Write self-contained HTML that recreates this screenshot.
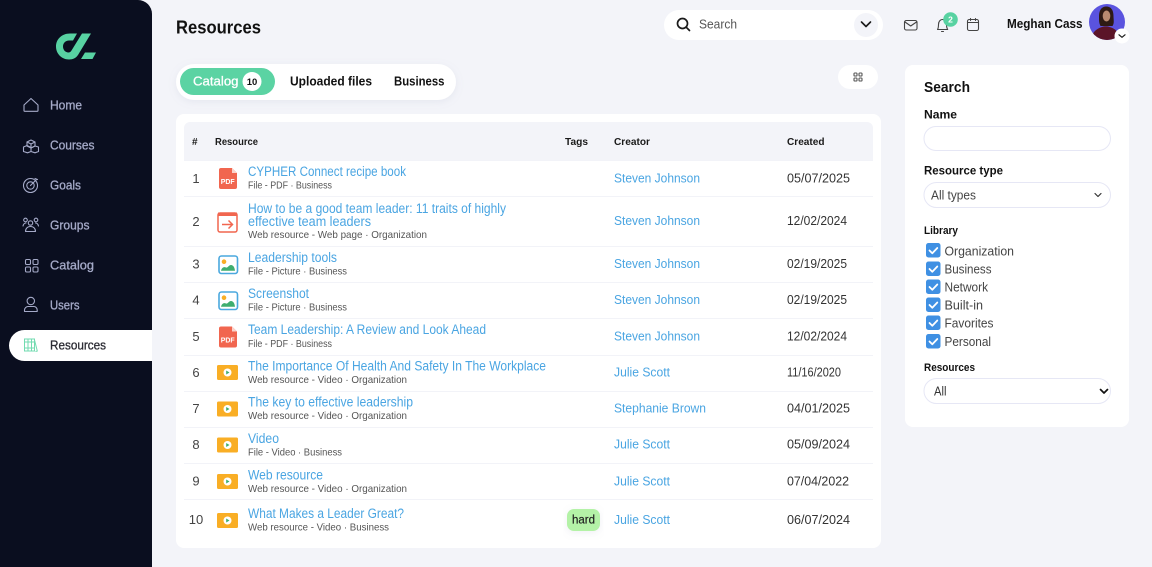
<!DOCTYPE html>
<html><head><meta charset="utf-8"><title>Resources</title>
<style>
html,body{margin:0;padding:0;background:#f3f4f9;width:1152px;height:567px;overflow:hidden}
svg{display:block}
text{font-family:"Liberation Sans",sans-serif}
.nav{font-size:13px;fill:#a5aac8;stroke:#a5aac8;stroke-width:.3}
.ttl{font-size:13.5px;fill:#4aa5e2}
.sub{font-size:10.5px;fill:#555}
.cr{font-size:13px;fill:#4aa5e2}
.dt{font-size:13px;fill:#333}
.n{font-size:13px;fill:#444;text-anchor:middle}
.th{font-size:10px;font-weight:bold;fill:#1a1a1a}
.b{font-weight:bold;fill:#111}
.lb{font-size:12.5px;fill:#444}
.ic{fill:none;stroke:#a5aac8;stroke-width:1.1;stroke-linejoin:round;stroke-linecap:round}
.dk{fill:none;stroke:#444;stroke-width:1.1;stroke-linejoin:round;stroke-linecap:round}
</style></head><body>
<svg width="1152" height="567" viewBox="0 0 1152 567" xmlns="http://www.w3.org/2000/svg">
<defs>
<g id="pdf"><path d="M0 2a2 2 0 0 1 2-2h11l5 5v14a2 2 0 0 1-2 2H2a2 2 0 0 1-2-2z" fill="#f1664f"/><path d="M13 0l5 5h-5z" fill="#fbd3cb"/><text x="8.700" y="16" text-anchor="middle" style="font-size:7px;font-weight:bold;fill:#fff">PDF</text></g>
<g id="pic"><rect x="1" y="1" width="18.500" height="17.500" rx="2.500" fill="#fff" stroke="#4aa8de" stroke-width="1.600"/><circle cx="6" cy="6.700" r="2.300" fill="#f9ae25"/><path d="M3 15.800c.8-3.300 3-4.300 5-3.300 2 .6 2.600-2.500 5-2.500 2.300 0 3.700 2.500 4 5.800z" fill="#3fae6f"/></g>
<g id="vid"><rect width="21" height="15" rx="1.500" fill="#f9ae25"/><circle cx="10.500" cy="7.500" r="4" fill="#fff"/><path d="M9.200 5.500l3.300 2-3.300 2z" fill="#3fae6f"/></g>
<g id="chk"><rect width="14.500" height="14.500" rx="2.500" fill="#3f90e3"/><path d="M3.500 7.500l2.800 2.800 5-5.300" fill="none" stroke="#fff" stroke-width="1.800" stroke-linecap="round" stroke-linejoin="round"/></g>
<filter id="sh" x="-10%" y="-30%" width="120%" height="170%"><feDropShadow dx="0" dy="2" stdDeviation="4" flood-color="#8a8fb0" flood-opacity=".13"/></filter>
<clipPath id="av"><circle cx="1107" cy="22" r="18"/></clipPath>
</defs>

<!-- sidebar -->
<path d="M0 0H138a14 14 0 0 1 14 14V567H0z" fill="#0a0e1f"/>
<path d="M77 33.500H70C62 33.500 56 39 56 46.500C56 54 62 59.500 69 59.500C73 59.500 76 58 78 55L91 33.500H82L71.500 50.500C70.500 52 69.500 52.500 68.500 52.500C65.500 52.500 63 50 63 46.500C63 43 65.500 40.500 69 40.500H73Z" fill="#58d2a2"/>
<path d="M85 52.500h11l-3.500 6.500H81z" fill="#58d2a2"/>

<path class="ic" d="M24 105l7-6.500 7 6.500v5.500a.8.8 0 0 1-.8.800H24.800a.8.8 0 0 1-.8-.800z"/>
<g class="ic"><path d="M27 142l4-2 4 2v4l-4 2-4-2z"/><path d="M23.500 147l3.500-1.500 4 2v4l-3.500 1.300-4-1.300z"/><path d="M31 148l4-2 3.500 1v4.500l-3.500 1.300-4-1.300"/><path d="M27 142l4 2 4-2M31 144v3"/></g>
<g class="ic"><circle cx="30.500" cy="185.500" r="7"/><circle cx="30.500" cy="185.500" r="3.700"/><path d="M30.500 185.500l6-6M35 178.500l2.500 1"/></g>
<g class="ic"><circle cx="25.500" cy="220" r="1.800"/><circle cx="30.500" cy="223" r="2.200"/><circle cx="36" cy="220" r="1.800"/><path d="M23 226c.5-2 1.500-3 3-3M38.500 226c-.5-2-1.500-3-3-3M25.500 231.500c0-3 2-5 5-5s5 2 5 5z"/></g>
<g class="ic"><rect x="25.500" y="259.500" width="5" height="5" rx="1.200"/><rect x="33" y="259.500" width="5" height="5" rx="1.200"/><rect x="25.500" y="267" width="5" height="5" rx="1.200"/><rect x="33" y="267" width="5" height="5" rx="1.200"/></g>
<g class="ic"><circle cx="30.800" cy="301" r="3.700"/><path d="M24.500 311.500v-1.500c0-2 2-3.500 3.500-3.500h6c1.500 0 3.200 1.500 3.200 3.500v1.500z"/></g>

<path d="M152 330H24.500a15.500 15.500 0 0 0 0 31H152z" fill="#fff"/>
<g fill="none" stroke="#72dbb0" stroke-width="1"><rect x="24.500" y="339" width="3.500" height="12"/><rect x="28" y="339" width="3.500" height="12"/><rect x="31.500" y="339" width="3" height="12"/><path d="M34.500 340l2.800 11 -1.800.5M24.500 342h10M24.500 348h10"/></g>

<text x="50" y="109.500" class="nav" textLength="32" lengthAdjust="spacingAndGlyphs">Home</text>
<text x="50" y="149.500" class="nav" textLength="44.500" lengthAdjust="spacingAndGlyphs">Courses</text>
<text x="50" y="189.500" class="nav" textLength="31" lengthAdjust="spacingAndGlyphs">Goals</text>
<text x="50" y="229.500" class="nav" textLength="39.500" lengthAdjust="spacingAndGlyphs">Groups</text>
<text x="50" y="269.500" class="nav" textLength="44" lengthAdjust="spacingAndGlyphs">Catalog</text>
<text x="50" y="309.500" class="nav" textLength="29.500" lengthAdjust="spacingAndGlyphs">Users</text>
<text x="50" y="349.500" class="nav" style="fill:#2b2b33;stroke:#2b2b33" textLength="56" lengthAdjust="spacingAndGlyphs">Resources</text>

<!-- header -->
<text x="176" y="33.500" class="b" style="font-size:18px" textLength="85" lengthAdjust="spacingAndGlyphs">Resources</text>
<rect x="664" y="10" width="219" height="30" rx="15" fill="#fff"/>
<g fill="none" stroke="#1a1a1a" stroke-width="1.700" stroke-linecap="round"><circle cx="682.500" cy="23.500" r="5"/><path d="M686.300 27.300l3.200 3.200"/></g>
<text x="699" y="28.500" style="font-size:13px;fill:#555" textLength="38" lengthAdjust="spacingAndGlyphs">Search</text>
<circle cx="866" cy="25" r="12" fill="#f3f4f9"/>
<path d="M861.500 22l4.500 4.500 4.500-4.500" fill="none" stroke="#1a1a1a" stroke-width="1.600" stroke-linecap="round" stroke-linejoin="round"/>

<g class="dk"><rect x="904.500" y="20.500" width="12.500" height="9.500" rx="1.800"/><path d="M905 22l5.700 4 5.800-4"/></g>
<g class="dk"><path d="M937.500 29.500c1-1.500 1-3 1-5 0-3 1.800-5 4-5s4 2 4 5c0 2 .2 3.500 1.200 5zM941.500 31.500h2"/></g>
<circle cx="950.500" cy="19.500" r="7.300" fill="#58d2a2"/>
<text x="950.500" y="22.500" text-anchor="middle" style="font-size:8.500px;font-weight:bold;fill:#fff">2</text>
<g class="dk"><rect x="967.500" y="19.500" width="11" height="11" rx="1.800"/><path d="M967.500 22.500h11M970.500 18.500v2M975.500 18.500v2"/></g>
<text x="1007" y="28" class="b" style="font-size:12.500px" textLength="75.500" lengthAdjust="spacingAndGlyphs">Meghan Cass</text>

<circle cx="1107" cy="22" r="18" fill="#5a53df"/>
<g clip-path="url(#av)">
<path d="M1099 17c0-8 3.500-10.500 7.500-10.500s7 3 7 9.500c0 4 1 7-1 10h-12c-1.500-3-1.500-5-1.500-9z" fill="#2e1a14"/>
<ellipse cx="1106.500" cy="16" rx="3.800" ry="5.500" fill="#b98a70"/>
<path d="M1091 42c0-8 4-13 11-15 2-.8 6-.8 7.500 0 5 1 10 5 11.500 15z" fill="#5b1428"/>
</g>
<circle cx="1122" cy="36" r="7.500" fill="#fff"/>
<path d="M1119 34.800l3 2.500 3-2.500" fill="none" stroke="#1a1a1a" stroke-width="1.200" stroke-linecap="round" stroke-linejoin="round"/>

<!-- tabs -->
<rect x="176" y="64" width="280" height="36" rx="18" fill="#fff" filter="url(#sh)"/>
<rect x="180" y="68" width="95" height="27" rx="13.500" fill="#5bd3a3"/>
<text x="193" y="85.500" style="font-size:13px;fill:#fff;stroke:#fff;stroke-width:.3" textLength="45.500" lengthAdjust="spacingAndGlyphs">Catalog</text>
<circle cx="252" cy="81.500" r="9.500" fill="#fff"/>
<text x="252" y="85" text-anchor="middle" style="font-size:9.500px;font-weight:bold;fill:#111">10</text>
<text x="290" y="85.500" class="b" style="font-size:13px" textLength="82" lengthAdjust="spacingAndGlyphs">Uploaded files</text>
<text x="394" y="85.500" class="b" style="font-size:13px" textLength="50.500" lengthAdjust="spacingAndGlyphs">Business</text>

<rect x="838" y="65" width="40" height="24" rx="12" fill="#fff"/>
<g fill="none" stroke="#555" stroke-width="1.100"><rect x="854" y="73" width="3" height="3" rx=".8"/><rect x="859" y="73" width="3" height="3" rx=".8"/><rect x="854" y="78" width="3" height="3" rx=".8"/><rect x="859" y="78" width="3" height="3" rx=".8"/></g>

<!-- main card -->
<rect x="176" y="114" width="705" height="434" rx="8" fill="#fff"/>
<path d="M184 128a6 6 0 0 1 6-6H867a6 6 0 0 1 6 6V160H184z" fill="#f3f4f9"/>
<text x="192" y="145" class="th" textLength="8">#</text>
<text x="215" y="145" class="th" textLength="43" lengthAdjust="spacingAndGlyphs">Resource</text>
<text x="565" y="145" class="th" textLength="23" lengthAdjust="spacingAndGlyphs">Tags</text>
<text x="614" y="145" class="th" textLength="36" lengthAdjust="spacingAndGlyphs">Creator</text>
<text x="787" y="145" class="th" textLength="37.500" lengthAdjust="spacingAndGlyphs">Created</text>

<g fill="#f2f3f8">
<rect x="184" y="160" width="689" height="1"/><rect x="184" y="196" width="689" height="1"/><rect x="184" y="246" width="689" height="1"/><rect x="184" y="282" width="689" height="1"/><rect x="184" y="318" width="689" height="1"/><rect x="184" y="355" width="689" height="1"/><rect x="184" y="391" width="689" height="1"/><rect x="184" y="427" width="689" height="1"/><rect x="184" y="463" width="689" height="1"/><rect x="184" y="499" width="689" height="1"/>
</g>

<!-- row numbers -->
<text x="196" y="183" class="n">1</text><text x="196" y="226" class="n">2</text><text x="196" y="268.500" class="n">3</text><text x="196" y="304.500" class="n">4</text><text x="196" y="341" class="n">5</text><text x="196" y="377" class="n">6</text><text x="196" y="413" class="n">7</text><text x="196" y="449" class="n">8</text><text x="196" y="485.500" class="n">9</text><text x="196" y="524" class="n">10</text>

<!-- icons -->
<use href="#pdf" x="219" y="168"/>
<g><path d="M218 215a2 2 0 0 1 2-2h15a2 2 0 0 1 2 2v15a2 2 0 0 1-2 2h-15a2 2 0 0 1-2-2z" fill="#fff" stroke="#f1664f" stroke-width="1.500"/><rect x="218" y="212.500" width="19" height="3.500" fill="#f1664f"/><path d="M222 224.500h10M228.500 220.500l4 4-4 4" fill="none" stroke="#f1664f" stroke-width="1.500"/></g>
<use href="#pic" x="218" y="255"/>
<use href="#pic" x="218" y="291"/>
<use href="#pdf" x="219" y="326.500"/>
<use href="#vid" x="217" y="365"/>
<use href="#vid" x="217" y="401.500"/>
<use href="#vid" x="217" y="437.500"/>
<use href="#vid" x="217" y="474"/>
<use href="#vid" x="217" y="513"/>

<!-- titles -->
<text x="248" y="176" class="ttl" textLength="158" lengthAdjust="spacingAndGlyphs">CYPHER Connect recipe book</text>
<text x="248" y="213" class="ttl" textLength="258" lengthAdjust="spacingAndGlyphs">How to be a good team leader: 11 traits of highly</text>
<text x="248" y="226" class="ttl" textLength="123" lengthAdjust="spacingAndGlyphs">effective team leaders</text>
<text x="248" y="262" class="ttl" textLength="89" lengthAdjust="spacingAndGlyphs">Leadership tools</text>
<text x="248" y="298" class="ttl" textLength="61" lengthAdjust="spacingAndGlyphs">Screenshot</text>
<text x="248" y="334" class="ttl" textLength="238" lengthAdjust="spacingAndGlyphs">Team Leadership: A Review and Look Ahead</text>
<text x="248" y="370.500" class="ttl" textLength="298" lengthAdjust="spacingAndGlyphs">The Importance Of Health And Safety In The Workplace</text>
<text x="248" y="406.500" class="ttl" textLength="165" lengthAdjust="spacingAndGlyphs">The key to effective leadership</text>
<text x="248" y="443" class="ttl" textLength="31" lengthAdjust="spacingAndGlyphs">Video</text>
<text x="248" y="479.500" class="ttl" textLength="75" lengthAdjust="spacingAndGlyphs">Web resource</text>
<text x="248" y="518" class="ttl" textLength="156" lengthAdjust="spacingAndGlyphs">What Makes a Leader Great?</text>

<!-- subs -->
<text x="248" y="188.500" class="sub" textLength="84" lengthAdjust="spacingAndGlyphs">File - PDF · Business</text>
<text x="248" y="238" class="sub" textLength="179" lengthAdjust="spacingAndGlyphs">Web resource - Web page · Organization</text>
<text x="248" y="274.500" class="sub" textLength="99" lengthAdjust="spacingAndGlyphs">File - Picture · Business</text>
<text x="248" y="310.500" class="sub" textLength="99" lengthAdjust="spacingAndGlyphs">File - Picture · Business</text>
<text x="248" y="347" class="sub" textLength="84" lengthAdjust="spacingAndGlyphs">File - PDF · Business</text>
<text x="248" y="383" class="sub" textLength="159" lengthAdjust="spacingAndGlyphs">Web resource - Video · Organization</text>
<text x="248" y="419" class="sub" textLength="159" lengthAdjust="spacingAndGlyphs">Web resource - Video · Organization</text>
<text x="248" y="455.500" class="sub" textLength="94" lengthAdjust="spacingAndGlyphs">File - Video · Business</text>
<text x="248" y="492" class="sub" textLength="159" lengthAdjust="spacingAndGlyphs">Web resource - Video · Organization</text>
<text x="248" y="530.500" class="sub" textLength="141" lengthAdjust="spacingAndGlyphs">Web resource - Video · Business</text>

<!-- tag -->
<rect x="567" y="509" width="33" height="22" rx="7" fill="#b4f2a7" filter="url(#sh)"/>
<text x="572" y="523.500" style="font-size:11.500px;fill:#222;stroke:#222;stroke-width:.2" textLength="23" lengthAdjust="spacingAndGlyphs">hard</text>

<!-- creators -->
<text x="614" y="182.500" class="cr" textLength="86" lengthAdjust="spacingAndGlyphs">Steven Johnson</text>
<text x="614" y="225" class="cr" textLength="86" lengthAdjust="spacingAndGlyphs">Steven Johnson</text>
<text x="614" y="268" class="cr" textLength="86" lengthAdjust="spacingAndGlyphs">Steven Johnson</text>
<text x="614" y="304" class="cr" textLength="86" lengthAdjust="spacingAndGlyphs">Steven Johnson</text>
<text x="614" y="340.500" class="cr" textLength="86" lengthAdjust="spacingAndGlyphs">Steven Johnson</text>
<text x="614" y="376.500" class="cr" textLength="56" lengthAdjust="spacingAndGlyphs">Julie Scott</text>
<text x="614" y="412.500" class="cr" textLength="92" lengthAdjust="spacingAndGlyphs">Stephanie Brown</text>
<text x="614" y="448.500" class="cr" textLength="56" lengthAdjust="spacingAndGlyphs">Julie Scott</text>
<text x="614" y="485.500" class="cr" textLength="56" lengthAdjust="spacingAndGlyphs">Julie Scott</text>
<text x="614" y="524" class="cr" textLength="56" lengthAdjust="spacingAndGlyphs">Julie Scott</text>

<!-- dates -->
<text x="787" y="182.500" class="dt" textLength="63" lengthAdjust="spacingAndGlyphs">05/07/2025</text>
<text x="787" y="225" class="dt" textLength="60" lengthAdjust="spacingAndGlyphs">12/02/2024</text>
<text x="787" y="268" class="dt" textLength="60" lengthAdjust="spacingAndGlyphs">02/19/2025</text>
<text x="787" y="304" class="dt" textLength="60" lengthAdjust="spacingAndGlyphs">02/19/2025</text>
<text x="787" y="340.500" class="dt" textLength="60" lengthAdjust="spacingAndGlyphs">12/02/2024</text>
<text x="787" y="376.500" class="dt" textLength="54" lengthAdjust="spacingAndGlyphs">11/16/2020</text>
<text x="787" y="412.500" class="dt" textLength="63" lengthAdjust="spacingAndGlyphs">04/01/2025</text>
<text x="787" y="448.500" class="dt" textLength="63" lengthAdjust="spacingAndGlyphs">05/09/2024</text>
<text x="787" y="485.500" class="dt" textLength="62" lengthAdjust="spacingAndGlyphs">07/04/2022</text>
<text x="787" y="524" class="dt" textLength="63" lengthAdjust="spacingAndGlyphs">06/07/2024</text>

<!-- search panel -->
<rect x="905" y="65" width="224" height="362" rx="8" fill="#fff"/>
<text x="924" y="92" class="b" style="font-size:14.500px" textLength="46" lengthAdjust="spacingAndGlyphs">Search</text>
<text x="924" y="118.500" class="b" style="font-size:12px" textLength="33" lengthAdjust="spacingAndGlyphs">Name</text>
<rect x="924" y="126.500" width="186.500" height="24" rx="12" fill="#fff" stroke="#e6e7f5"/>
<text x="924" y="174.500" class="b" style="font-size:12px" textLength="79" lengthAdjust="spacingAndGlyphs">Resource type</text>
<rect x="924" y="182.500" width="186.500" height="25" rx="12.500" fill="#fff" stroke="#e6e7f5"/>
<text x="931" y="199.500" style="font-size:12.500px;fill:#444" textLength="45" lengthAdjust="spacingAndGlyphs">All types</text>
<path d="M1095 193.500l3 3 3-3" fill="none" stroke="#333" stroke-width="1.200" stroke-linecap="round" stroke-linejoin="round"/>
<text x="924" y="234" class="b" style="font-size:11px" textLength="34" lengthAdjust="spacingAndGlyphs">Library</text>

<use href="#chk" x="926" y="243"/><use href="#chk" x="926" y="261.500"/><use href="#chk" x="926" y="279.500"/><use href="#chk" x="926" y="297.500"/><use href="#chk" x="926" y="315.500"/><use href="#chk" x="926" y="334"/>
<text x="944.500" y="255.500" class="lb" textLength="69.500" lengthAdjust="spacingAndGlyphs">Organization</text>
<text x="944.500" y="273.500" class="lb" textLength="47" lengthAdjust="spacingAndGlyphs">Business</text>
<text x="944.500" y="291.500" class="lb" textLength="43.500" lengthAdjust="spacingAndGlyphs">Network</text>
<text x="944.500" y="309.500" class="lb" textLength="38.500" lengthAdjust="spacingAndGlyphs">Built-in</text>
<text x="944.500" y="327.500" class="lb" textLength="49" lengthAdjust="spacingAndGlyphs">Favorites</text>
<text x="944.500" y="346" class="lb" textLength="46.500" lengthAdjust="spacingAndGlyphs">Personal</text>

<text x="924" y="371" class="b" style="font-size:11px" textLength="51" lengthAdjust="spacingAndGlyphs">Resources</text>
<rect x="924" y="378.500" width="186.500" height="25" rx="12.500" fill="#fff" stroke="#e6e7f5"/>
<text x="934" y="395.500" style="font-size:12.500px;fill:#333" textLength="12.500" lengthAdjust="spacingAndGlyphs">All</text>
<path d="M1100.500 389.500l3.500 3.500 3.500-3.500" fill="none" stroke="#111" stroke-width="1.700" stroke-linecap="round" stroke-linejoin="round"/>
</svg>
</body></html>
